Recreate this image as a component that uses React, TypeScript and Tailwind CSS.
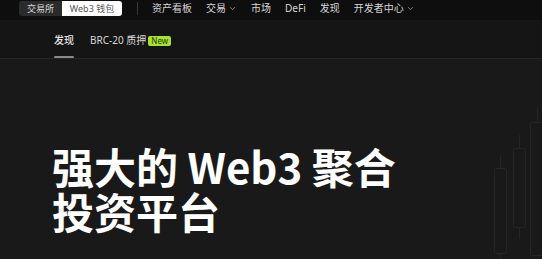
import { ChevronDown } from "lucide-react";

const navItems = [
  { label: "资产看板" },
  { label: "交易", caret: true },
  { label: "市场" },
  { label: "DeFi" },
  { label: "发现" },
  { label: "开发者中心", caret: true },
];

function Candles() {
  return (
    <svg
      className="absolute right-0 top-0 h-full w-[60px]"
      viewBox="0 0 60 200"
      fill="none"
      stroke="#252525"
      strokeWidth="1"
    >
      {/* wicks */}
      <line x1="18.5" y1="96" x2="18.5" y2="109" />
      <line x1="18.5" y1="194" x2="18.5" y2="200" />
      <line x1="37.5" y1="76" x2="37.5" y2="89" />
      <line x1="37.5" y1="168" x2="37.5" y2="180" />
      <line x1="55.5" y1="49" x2="55.5" y2="63" />
      {/* bodies */}
      <rect x="12.5" y="109.5" width="12" height="85" rx="1" />
      <rect x="31.5" y="89.5" width="12" height="79" rx="1" />
      <rect x="48.5" y="63.5" width="14" height="133" rx="1" />
    </svg>
  );
}

export default function App() {
  return (
    <div
      className="h-[259px] w-[542px] overflow-hidden bg-[#191919] text-white"
      style={{ fontFamily: '"Noto Sans", "Noto Sans CJK SC", sans-serif' }}
    >
      {/* top bar */}
      <header className="flex h-[20px] items-start bg-[#0e0e0e] pl-[19px]">
        <div className="mt-px flex h-[15px] overflow-hidden rounded-[3px] text-[9px] leading-none">
          <span className="flex w-[43px] items-center justify-center bg-[#2b2b2b] text-[#d8d8d8]">
            交易所
          </span>
          <span className="flex w-[60px] items-center justify-center bg-white text-[#555]">
            Web3 钱包
          </span>
        </div>
        <div className="ml-[15px] mt-[2px] h-[13px] w-px bg-[#3a3a3a]" />
        <nav className="ml-[14px] flex h-[17px] items-center gap-[14px] text-[10px] text-[#d6d6d6]">
          {navItems.map((item) => (
            <span key={item.label} className="flex items-center gap-[2px]">
              {item.label}
              {item.caret && (
                <ChevronDown className="h-[9px] w-[9px] text-[#aaa]" strokeWidth={2} />
              )}
            </span>
          ))}
        </nav>
      </header>

      {/* sub nav */}
      <div className="flex h-[39px] items-stretch border-b border-[#262626] bg-[#151515] pl-[54px] text-[10px]">
        <span className="relative flex items-center pt-[3px] font-medium text-[#e6e6e6]">
          发现
          <span className="absolute bottom-0 left-0 h-[2px] w-full rounded-full bg-[#8a8a8a]" />
        </span>
        <span className="ml-[16px] flex items-center gap-[2px] pt-[3px] text-[#d6d6d6]">
          BRC-20 质押
          <span className="rounded-[2px] bg-[#a6e22e] px-[3px] text-[8px] leading-[10px] text-[#2a3a00]">
            New
          </span>
        </span>
      </div>

      {/* hero */}
      <section className="relative h-[200px] pl-[52px] pt-[84px]">
        <Candles />
        <h1
          className="text-[42px] font-bold leading-[45px] text-white"
          style={{ fontFamily: '"Noto Sans CJK SC", sans-serif' }}
        >
          <span className="block">强大的 Web3 聚合</span>
          <span className="block">投资平台</span>
        </h1>
      </section>
    </div>
  );
}
